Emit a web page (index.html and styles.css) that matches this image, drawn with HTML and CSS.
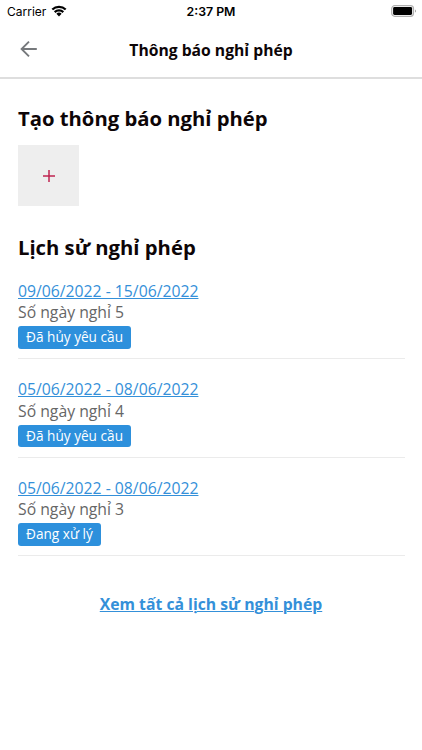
FILE: index.html
```html
<!DOCTYPE html>
<html lang="vi">
<head>
    <meta charset="UTF-8">
    <meta name="viewport" content="width=device-width, initial-scale=1.0">
    <title>Thông báo nghỉ phép</title>
    <link rel="stylesheet" href="styles.css">
</head>
<body>
    <div class="status-bar">
        <div class="carrier">
            <span>Carrier</span>
            <svg class="wifi" viewBox="0 0 16 12">
                <path d="M1.3 4.5a9.6 9.6 0 0 1 13.4 0M3.7 7.1a6.2 6.2 0 0 1 8.6 0" fill="none" stroke="#000" stroke-width="2.2"/>
                <path d="M8 11.4 5.4 8.8a3.8 3.8 0 0 1 5.2 0z"/>
            </svg>
        </div>
        <div class="time">2:37 PM</div>
        <div class="battery">
            <svg viewBox="0 0 26 12">
                <rect x=".7" y=".7" width="21.8" height="10.6" rx="3" fill="#fff" stroke="#b0b0b0" stroke-width="1.2"/>
                <rect x="2.1" y="2.1" width="19" height="7.8" rx="1.4"/>
                <path d="M24 4.4v3.2c1.3-.6 1.3-2.6 0-3.2z" fill="#999"/>
            </svg>
        </div>
    </div>
    <header class="header">
        <a class="back" href="#" aria-label="Quay lại">
            <svg viewBox="0 0 18 18">
                <path d="M16.8 9H2M9 1.6 1.6 9 9 16.4" fill="none" stroke="#76797c" stroke-width="1.9"/>
            </svg>
        </a>
        <h1>Thông báo nghỉ phép</h1>
    </header>
    <main class="content">
        <h2>Tạo thông báo nghỉ phép</h2>
        <button class="add-button" aria-label="Tạo">
            <svg viewBox="0 0 12 12">
                <path d="M6 0v12M0 6h12" stroke="#c02450" stroke-width="1.5"/>
            </svg>
        </button>
        <h2>Lịch sử nghỉ phép</h2>
        <ul class="history">
            <li>
                <a href="#">09/06/2022 - 15/06/2022</a>
                <p>Số ngày nghỉ 5</p>
                <span class="badge">Đã hủy yêu cầu</span>
            </li>
            <li>
                <a href="#">05/06/2022 - 08/06/2022</a>
                <p>Số ngày nghỉ 4</p>
                <span class="badge">Đã hủy yêu cầu</span>
            </li>
            <li>
                <a href="#">05/06/2022 - 08/06/2022</a>
                <p>Số ngày nghỉ 3</p>
                <span class="badge">Đang xử lý</span>
            </li>
        </ul>
        <a class="view-all" href="#">Xem tất cả lịch sử nghỉ phép</a>
    </main>
</body>
</html>
```
FILE: styles.css
```css
/* General styling */
* {
    box-sizing: border-box;
}
body {
    margin: 0;
    min-height: 100vh;
    background-color: #fff;
    color: #0d0507;
    font-family: "Open Sans", sans-serif;
}
h1, h2, p, ul {
    margin: 0;
    padding: 0;
}
svg {
    display: block;
}
/* Status bar */
.status-bar {
    display: grid;
    grid-template-columns: 1fr auto 1fr;
    align-items: center;
    height: 21px;
    padding: 0 5px 0 7px;
    font-family: Inter, sans-serif;
    font-size: 12px;
    color: #000;
}
.carrier {
    display: flex;
    align-items: center;
    gap: 5px;
}
.carrier span,
.time {
    padding-top: 1px;
}
.wifi {
    width: 16px;
    height: 12px;
}
.time {
    margin-right: 2px;
    font-size: 12.3px;
    font-weight: 600;
}
.battery {
    justify-self: end;
    width: 26px;
}
/* Header */
.header {
    display: grid;
    grid-template-columns: 18px 1fr 18px;
    align-items: center;
    height: 58px;
    padding: 0 20px;
    border-bottom: 2px solid #dedede;
}
.back svg {
    width: 18px;
    height: 18px;
}
.header h1 {
    padding-top: 2px;
    text-align: center;
    font-size: 15.7px;
    font-weight: 700;
}
/* Content */
.content {
    padding: 25px 18px 0;
}
h2 {
    font-size: 20.25px;
    line-height: 28px;
    font-weight: 700;
}
.add-button {
    display: flex;
    align-items: center;
    justify-content: center;
    width: 61px;
    height: 61px;
    margin: 13px 0 27px;
    padding: 0;
    border: none;
    background-color: #eee;
}
.add-button svg {
    width: 12px;
    height: 12px;
}
.history {
    margin-top: 19.5px;
    list-style: none;
    font-size: 15.75px;
    line-height: 21.5px;
}
.history li {
    height: 98.5px;
    width: 387px;
    border-bottom: 1px solid #ebebeb;
    padding-top: 20px;
}
.history li:first-child {
    height: 78.5px;
    padding-top: 0;
}
.history a {
    display: block;
    color: #3490d9;
    text-underline-offset: 1px;
    text-decoration-skip-ink: none;
}
.history p {
    color: #666;
}
.badge {
    display: block;
    width: fit-content;
    margin-top: 2.5px;
    padding: 0 8px;
    border-radius: 3px;
    background-color: #2d90dc;
    color: #fff;
    font-size: 13.65px;
    line-height: 22.5px;
}
.view-all {
    display: block;
    margin-top: 37px;
    text-align: center;
    font-size: 15.75px;
    line-height: 22px;
    font-weight: 700;
    color: #3490d9;
    text-decoration-thickness: 1px;
    text-underline-offset: 1px;
}
```
